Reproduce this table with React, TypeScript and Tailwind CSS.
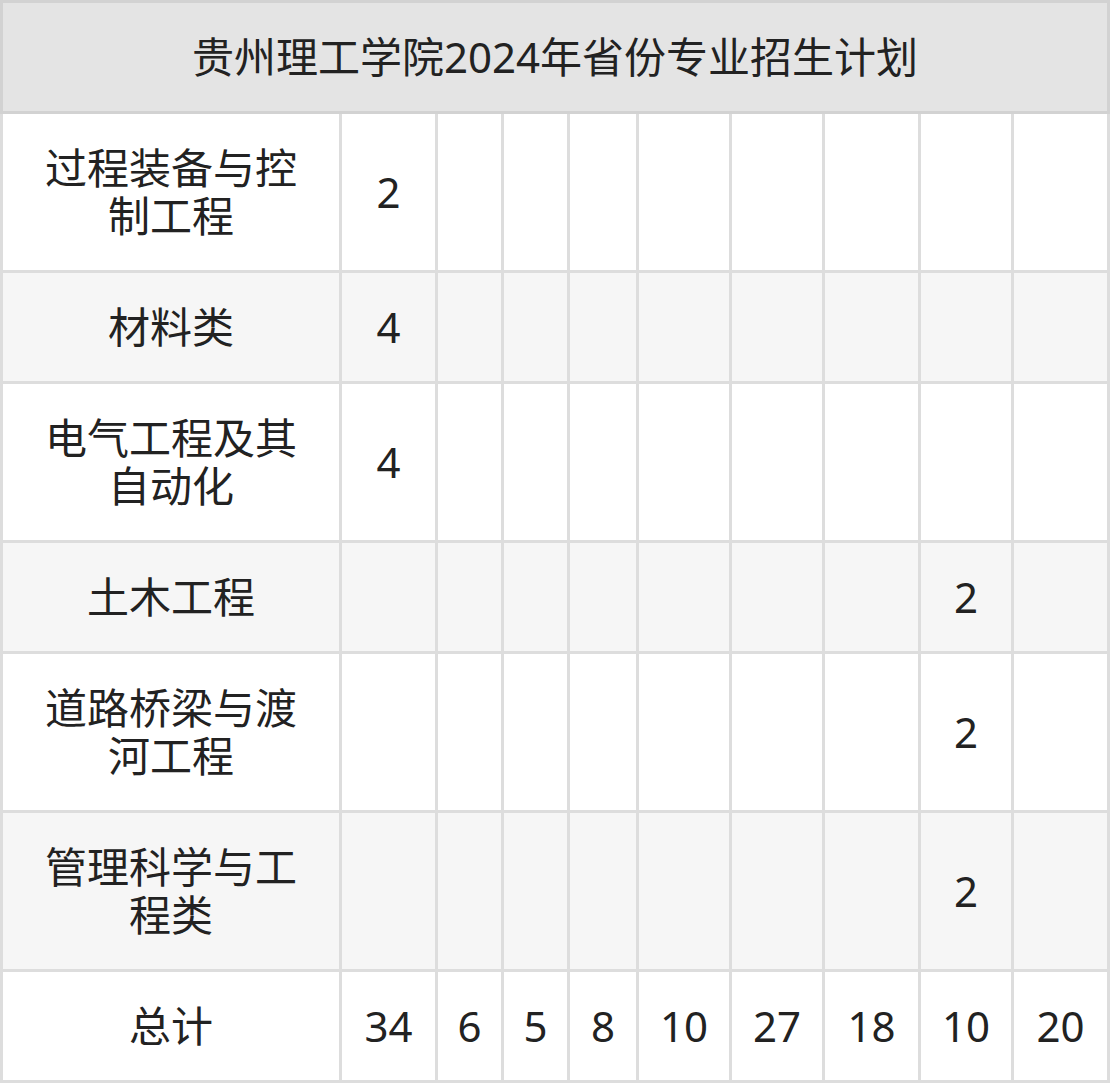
import React from "react";

const rows: { name: string; vals: string[]; striped: boolean }[] = [
  { name: "过程装备与控制工程", vals: ["2", "", "", "", "", "", "", "", ""], striped: false },
  { name: "材料类", vals: ["4", "", "", "", "", "", "", "", ""], striped: true },
  { name: "电气工程及其自动化", vals: ["4", "", "", "", "", "", "", "", ""], striped: false },
  { name: "土木工程", vals: ["", "", "", "", "", "", "", "2", ""], striped: true },
  { name: "道路桥梁与渡河工程", vals: ["", "", "", "", "", "", "", "2", ""], striped: false },
  { name: "管理科学与工程类", vals: ["", "", "", "", "", "", "", "2", ""], striped: true },
  { name: "总计", vals: ["34", "6", "5", "8", "10", "27", "18", "10", "20"], striped: false },
];

export default function App() {
  return (
    <div
      className="w-[1110px] h-[1083px] bg-white text-[#222] text-[42px] leading-[48px]"
      style={{ fontFamily: '"Noto Sans", "Noto Sans CJK SC", sans-serif' }}
    >
      <div className="h-[114px] bg-[#e4e4e4] border-[3px] border-[#d2d2d2] flex items-center justify-center">
        贵州理工学院2024年省份专业招生计划
      </div>
      <div className="grid grid-cols-[336px_93px_63px_63px_66px_90px_90px_93px_90px_93px] grid-rows-[156px_108px_156px_108px_156px_156px_108px] gap-[3px] bg-[#dddddd] px-[3px] pb-[3px]">
        {rows.map((r, i) => (
          <React.Fragment key={i}>
            <div
              className={`flex items-center justify-center text-center px-[30px] ${
                r.striped ? "bg-[#f6f6f6]" : "bg-white"
              }`}
            >
              {r.name}
            </div>
            {r.vals.map((v, j) => (
              <div
                key={j}
                className={`flex items-center justify-center ${
                  r.striped ? "bg-[#f6f6f6]" : "bg-white"
                }`}
              >
                {v}
              </div>
            ))}
          </React.Fragment>
        ))}
      </div>
    </div>
  );
}
